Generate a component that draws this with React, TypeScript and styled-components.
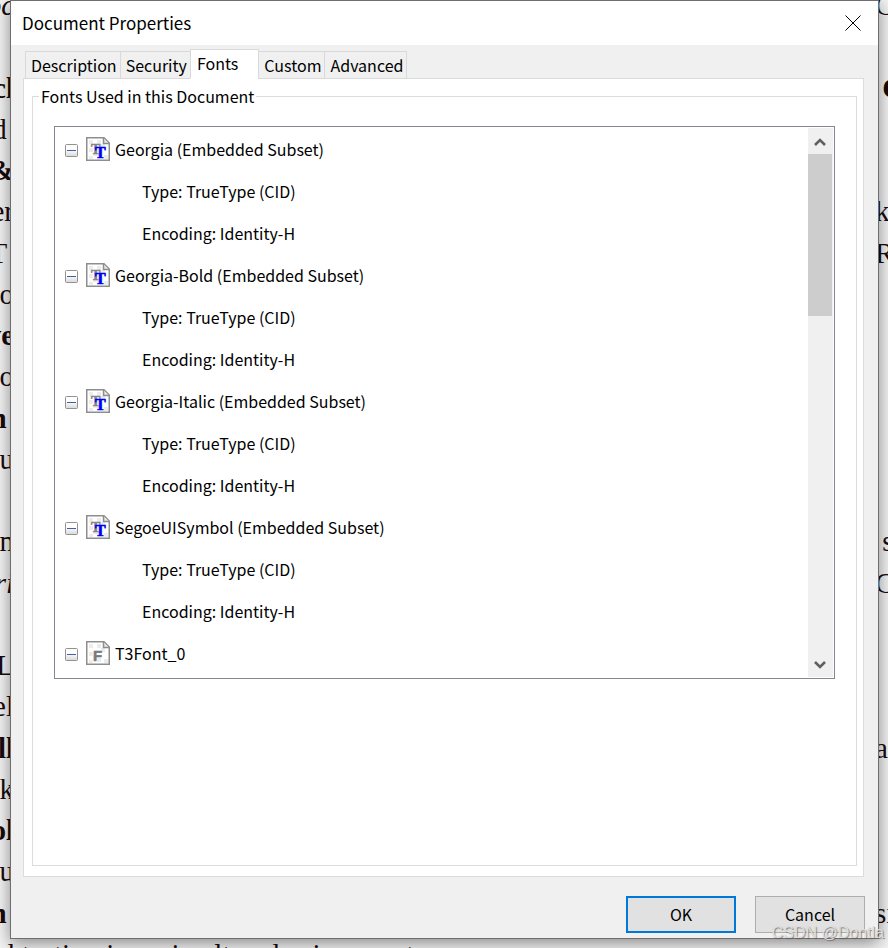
import React from "react";
import styled, { createGlobalStyle } from "styled-components";

const uiFont = `"Noto Sans CJK SC", "Noto Sans", sans-serif`;

const GlobalStyle = createGlobalStyle`
  * { box-sizing: border-box; }
  body {
    margin: 0;
    background: #ffffff;
    color: #000000;
    font-family: ${uiFont};
    font-size: 16px;
    line-height: 24px;
    overflow: hidden;
  }
  button { font: inherit; color: inherit; }
`;

const Screen = styled.div`
  position: relative;
  min-height: 100vh;
  overflow: hidden;
  display: flex;
  flex-direction: column;
`;

const Page = styled.div`
  position: absolute;
  inset: 0 0 -42px 0;
  display: grid;
  grid-auto-rows: 1fr;
  background: #f4f4f4;
  color: #180a0e;
  font-family: "Liberation Serif", serif;
  font-size: 29px;
  line-height: 32px;
  white-space: pre;
`;

const PageLine = styled.div`
  display: flex;
  justify-content: space-between;
  min-width: 0;
  min-height: 0;
`;

const LineStart = styled.span<{ $bold?: boolean; $italic?: boolean; $full?: boolean }>`
  display: flex;
  justify-content: ${(p) => (p.$full ? "flex-start" : "flex-end")};
  width: ${(p) => (p.$full ? "auto" : "14px")};
  overflow: hidden;
  margin-top: -11px;
  font-weight: ${(p) => (p.$bold ? 700 : 400)};
  font-style: ${(p) => (p.$italic ? "italic" : "normal")};
`;

const LineEnd = styled.span<{ $bold?: boolean }>`
  width: 13px;
  overflow: hidden;
  margin-top: -11px;
  font-weight: ${(p) => (p.$bold ? 700 : 400)};
`;

const Dialog = styled.section`
  position: relative;
  flex: 1;
  display: flex;
  flex-direction: column;
  margin: 0 9px 9px 10px;
  border: 1px solid #6e6e6e;
  background: #f0f0f0;
  box-shadow: 0 4px 16px rgba(0, 0, 0, 0.45);
`;

const TitleBar = styled.header`
  display: flex;
  align-items: center;
  justify-content: space-between;
  height: 44px;
  padding: 0 17px 0 11px;
  background: #ffffff;
`;

const Title = styled.h1`
  margin: 0;
  font-size: 17px;
  font-weight: 400;
`;

const CloseButton = styled.button`
  display: flex;
  padding: 0;
  border: 0;
  background: none;
`;

const Tabs = styled.div`
  display: flex;
  align-items: flex-end;
  margin: 4px 14px -1px;
  height: 30px;
  z-index: 1;
`;

const Tab = styled.button<{ $active?: boolean }>`
  height: ${(p) => (p.$active ? "30px" : "28px")};
  padding: ${(p) => (p.$active ? "0 20px 2px 6px" : "0 3px 0 5px")};
  border: 1px solid #d9d9d9;
  border-bottom-color: ${(p) => (p.$active ? "#ffffff" : "#d9d9d9")};
  background: ${(p) => (p.$active ? "#ffffff" : "#f0f0f0")};
  white-space: nowrap;
  & + & { margin-left: -1px; }
`;

const Panel = styled.div`
  flex: 1;
  display: flex;
  margin: 0 14px 0 12px;
  padding: 5px 6px 10px 8px;
  border: 1px solid #dcdcdc;
  background: #ffffff;
`;

const Group = styled.fieldset`
  flex: 1;
  min-width: 0;
  margin: 0;
  padding: 18px 21px 0;
  border: 1px solid #dcdcdc;
`;

const Legend = styled.legend`
  margin-left: -15px;
  padding: 0 2px;
`;

const TreeBox = styled.div`
  display: flex;
  padding: 1px;
  border: 1px solid #828790;
  background: #ffffff;
`;

const Tree = styled.ul`
  flex: 1;
  margin: 0;
  padding: 1px 0 2px 9px;
  list-style: none;
`;

const FontRow = styled.div`
  display: flex;
  align-items: center;
  height: 42px;
  padding-bottom: 2px;
`;

const Toggle = styled.button`
  display: flex;
  margin-right: 8px;
  padding: 3px 0 0;
  border: 0;
  background: none;
`;

const FontName = styled.span`
  margin-left: 5px;
`;

const Details = styled.ul`
  margin: 0;
  padding: 0 0 0 77px;
  list-style: none;
`;

const Detail = styled.li`
  padding-bottom: 2px;
  line-height: 40px;
`;

const ScrollBar = styled.div`
  display: flex;
  flex-direction: column;
  width: 25px;
  background: #f0f0f0;
`;

const ScrollButton = styled.button`
  display: flex;
  align-items: center;
  justify-content: center;
  height: 26px;
  padding: 2px 1px 0 0;
  border: 0;
  background: none;
`;

const ScrollTrack = styled.div`
  flex: 1;
  padding-right: 1px;
`;

const ScrollThumb = styled.div`
  height: 162px;
  background: #cdcdcd;
`;

const Footer = styled.footer`
  display: flex;
  justify-content: flex-end;
  gap: 19px;
  padding: 19px 13px 5px;
`;

const DialogButton = styled.button<{ $primary?: boolean }>`
  width: 110px;
  height: 37px;
  padding: 0 0 2px;
  border: ${(p) => (p.$primary ? "2px solid #0078d7" : "1px solid #adadad")};
  background: #e1e1e1;
`;

const Watermark = styled.div`
  position: absolute;
  right: 4px;
  bottom: 5px;
  color: #dedede;
  font-family: "Liberation Sans", sans-serif;
  font-size: 16px;
  line-height: 20px;
  text-shadow: 1px 1px 1px rgba(90, 90, 90, 0.7);
`;

type Line = {
  start: string;
  end?: string;
  bold?: boolean;
  italic?: boolean;
  endBold?: boolean;
  full?: boolean;
};

const lines: Line[] = [
  { start: "oc", italic: true, end: "C" },
  { start: "" },
  { start: "cl", bold: true, end: " C", endBold: true },
  { start: "d " },
  { start: "&", bold: true },
  { start: "er", end: "k" },
  { start: "T ", end: "R" },
  { start: ", o" },
  { start: "ve", bold: true },
  { start: "lo" },
  { start: "n ", bold: true },
  { start: "ou" },
  { start: "" },
  { start: "n", end: " s" },
  { start: "ri", italic: true, end: "C" },
  { start: "" },
  { start: "L", bold: true },
  { start: "el" },
  { start: "ll", bold: true, end: "as" },
  { start: "k" },
  { start: "ol", bold: true },
  { start: "u" },
  { start: "n ", bold: true, end: "si" },
  { start: "d testing is, as in alt and using  next", full: true },
];

const fonts = [
  { name: "Georgia (Embedded Subset)", trueType: true },
  { name: "Georgia-Bold (Embedded Subset)", trueType: true },
  { name: "Georgia-Italic (Embedded Subset)", trueType: true },
  { name: "SegoeUISymbol (Embedded Subset)", trueType: true },
  { name: "T3Font_0", trueType: false },
];

const MinusBox = () => (
  <svg width="13" height="13" viewBox="0 0 13 13">
    <defs>
      <linearGradient id="box" x1="0" y1="0" x2="0" y2="1">
        <stop offset="0.4" stopColor="#ffffff" />
        <stop offset="1" stopColor="#d8d8d8" />
      </linearGradient>
    </defs>
    <rect x="0.5" y="0.5" width="12" height="12" rx="1" fill="url(#box)" stroke="#919191" />
    <path d="M2 6.5h9" stroke="#3f5fa5" />
  </svg>
);

const FontIcon = ({ trueType }: { trueType: boolean }) => (
  <svg width="24" height="24" viewBox="0 0 24 24" fontWeight="700" aria-hidden="true">
    <path d="M.75.75H18L23.25 6v17.25H.75z" fill="#fff" stroke="#8e8e8e" strokeWidth="1.5" />
    <path d="M3 3h4v4H3zM11 3h4v4h-4zM3 11h4v4H3zM7 15h4v4H7zM15 7h4v4h-4zM11 17h4v4h-4zM3 19h4v3H3zM18 18h4v4h-4z" fill="#ececec" />
    <path d="M17.5 1v5.5H23" fill="#e6e6e6" stroke="#8e8e8e" strokeWidth="1.5" />
    {trueType ? (
      <>
        <text x="5" y="17" fontFamily="Liberation Serif, serif" fontSize="14" fill="#858585" stroke="#858585" strokeWidth="0.6">T</text>
        <text x="9" y="21" fontFamily="Liberation Serif, serif" fontSize="16" fill="#0000f5" stroke="#0000f5" strokeWidth="0.6">T</text>
      </>
    ) : (
      <text x="7" y="20" fontFamily="Liberation Sans, sans-serif" fontSize="15" fill="#7a7a7a" stroke="#7a7a7a" strokeWidth="0.5">F</text>
    )}
  </svg>
);

const Chevron = ({ down }: { down?: boolean }) => (
  <svg width="12" height="10" viewBox="0 0 12 10">
    <path d={down ? "M1 2l5 5 5-5" : "M1 8l5-5 5 5"} fill="none" stroke="#606060" strokeWidth="2.6" />
  </svg>
);

export default function App() {
  return (
    <Screen>
      <GlobalStyle />
      <Page aria-hidden="true">
        {lines.map((l, i) => (
          <PageLine key={i}>
            <LineStart $bold={l.bold} $italic={l.italic} $full={l.full}>{l.start}</LineStart>
            {l.end && <LineEnd $bold={l.endBold}>{l.end}</LineEnd>}
          </PageLine>
        ))}
      </Page>
      <Dialog role="dialog" aria-labelledby="dialog-title">
        <TitleBar>
          <Title id="dialog-title">Document Properties</Title>
          <CloseButton aria-label="Close">
            <svg width="16" height="16" viewBox="0 0 16 16">
              <path d="M.5.5l15 15M15.5.5l-15 15" stroke="#000" strokeWidth="1" />
            </svg>
          </CloseButton>
        </TitleBar>
        <Tabs role="tablist">
          {["Description", "Security", "Fonts", "Custom", "Advanced"].map((t) => (
            <Tab key={t} role="tab" aria-selected={t === "Fonts"} $active={t === "Fonts"}>{t}</Tab>
          ))}
        </Tabs>
        <Panel role="tabpanel">
          <Group>
            <Legend>Fonts Used in this Document</Legend>
            <TreeBox>
              <Tree>
                {fonts.map((f) => (
                  <li key={f.name}>
                    <FontRow>
                      <Toggle aria-label={`Collapse ${f.name}`}><MinusBox /></Toggle>
                      <FontIcon trueType={f.trueType} />
                      <FontName>{f.name}</FontName>
                    </FontRow>
                    {f.trueType && (
                      <Details>
                        <Detail>Type: TrueType (CID)</Detail>
                        <Detail>Encoding: Identity-H</Detail>
                      </Details>
                    )}
                  </li>
                ))}
              </Tree>
              <ScrollBar>
                <ScrollButton aria-label="Scroll up"><Chevron /></ScrollButton>
                <ScrollTrack><ScrollThumb /></ScrollTrack>
                <ScrollButton aria-label="Scroll down"><Chevron down /></ScrollButton>
              </ScrollBar>
            </TreeBox>
          </Group>
        </Panel>
        <Footer>
          <DialogButton $primary>OK</DialogButton>
          <DialogButton>Cancel</DialogButton>
        </Footer>
      </Dialog>
      <Watermark>CSDN @Dontla</Watermark>
    </Screen>
  );
}
